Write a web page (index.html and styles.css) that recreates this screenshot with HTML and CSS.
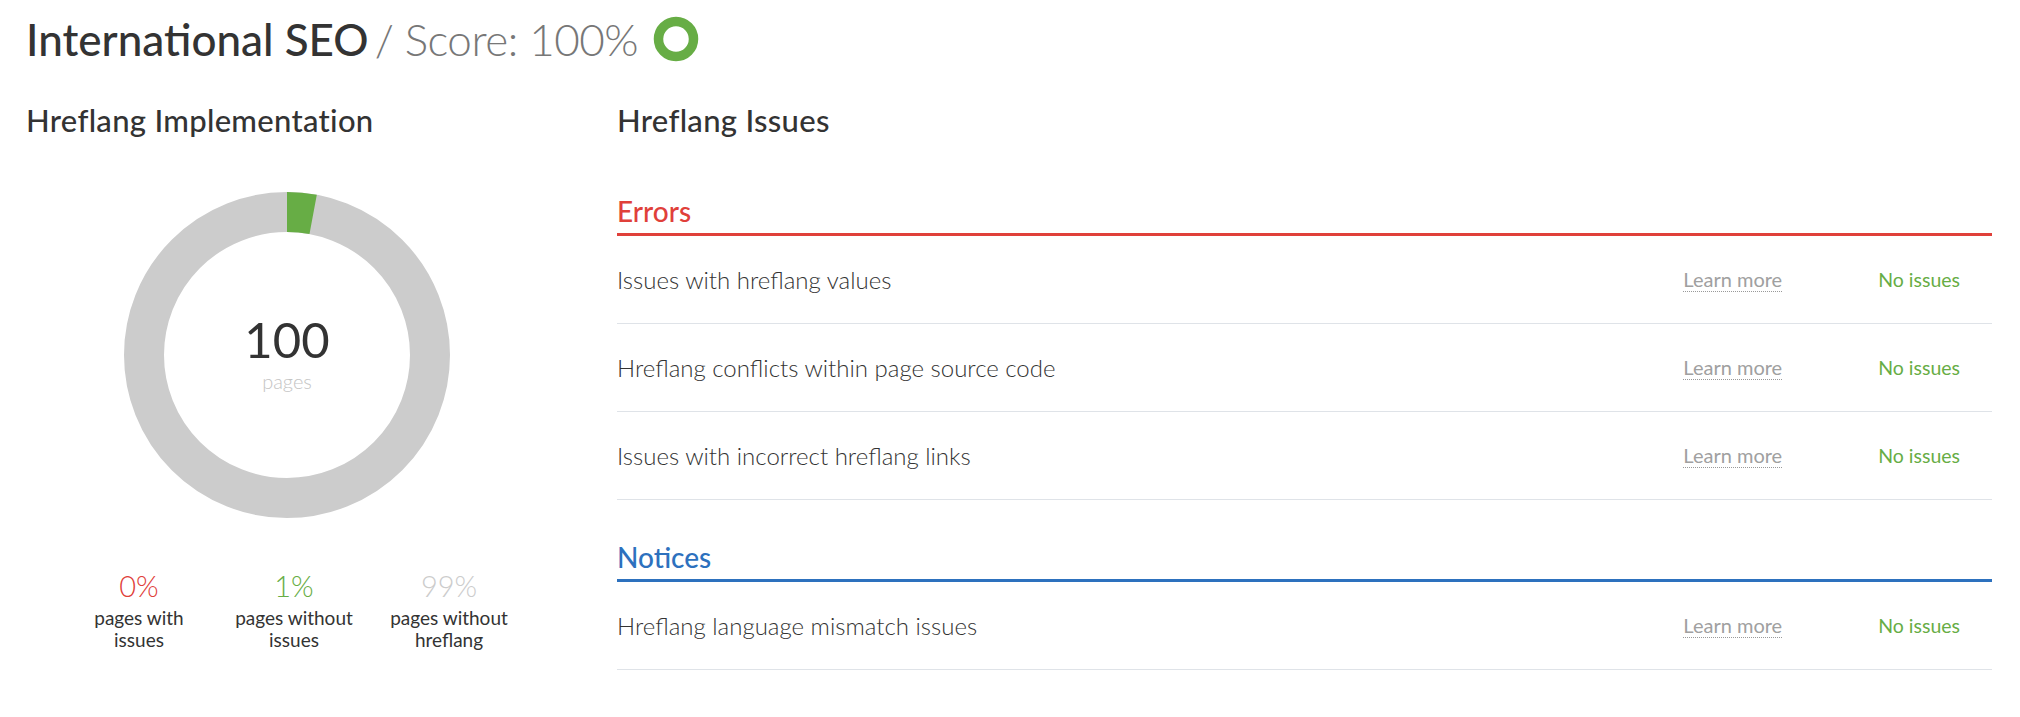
FILE: index.html
```html
<!DOCTYPE html>
<html lang="en">
<head>
    <meta charset="UTF-8">
    <meta name="viewport" content="width=device-width, initial-scale=1.0">
    <title>International SEO</title>
    <link rel="stylesheet" href="styles.css">
</head>
<body>

    <div class="page">
        <!-- Titre + score global -->
        <h1 class="page-title">
            <span class="title-main">International SEO</span>
            <span class="score">/ Score: 100%</span>
            <svg class="score-ring" width="46" height="46" viewBox="0 0 46 46">
                <circle cx="23" cy="23" r="17.5" fill="none" stroke="#67ad45" stroke-width="9.5"/>
            </svg>
        </h1>

        <div class="columns">
            <!-- Colonne gauche : graphique -->
            <section class="impl">
                <h2 class="block-title">Hreflang Implementation</h2>

                <div class="donut">
                    <svg width="326" height="326" viewBox="0 0 326 326">
                        <circle cx="163" cy="163" r="143" fill="none" stroke="#cccccc" stroke-width="40"/>
                        <circle cx="163" cy="163" r="143" fill="none" stroke="#67ad45" stroke-width="40"
                                stroke-dasharray="26.3 900" transform="rotate(-90 163 163)"/>
                    </svg>
                    <div class="donut-label">
                        <span class="donut-num">100</span>
                        <span class="donut-unit">pages</span>
                    </div>
                </div>

                <div class="stats">
                    <div class="stat">
                        <div class="stat-value red">0%</div>
                        <div class="stat-label">pages with<br>issues</div>
                    </div>
                    <div class="stat">
                        <div class="stat-value green">1%</div>
                        <div class="stat-label">pages without<br>issues</div>
                    </div>
                    <div class="stat">
                        <div class="stat-value grey">99%</div>
                        <div class="stat-label">pages without<br>hreflang</div>
                    </div>
                </div>
            </section>

            <!-- Colonne droite : liste des problèmes -->
            <section class="issues">
                <h2 class="block-title">Hreflang Issues</h2>

                <div class="group errors">
                    <h3 class="group-title">Errors</h3>
                    <div class="issue-row">
                        <span class="issue-name">Issues with hreflang values</span>
                        <a class="learn-more" href="#">Learn more</a>
                        <span class="issue-status">No issues</span>
                    </div>
                    <div class="issue-row">
                        <span class="issue-name">Hreflang conflicts within page source code</span>
                        <a class="learn-more" href="#">Learn more</a>
                        <span class="issue-status">No issues</span>
                    </div>
                    <div class="issue-row">
                        <span class="issue-name">Issues with incorrect hreflang links</span>
                        <a class="learn-more" href="#">Learn more</a>
                        <span class="issue-status">No issues</span>
                    </div>
                </div>

                <div class="group notices">
                    <h3 class="group-title">Notices</h3>
                    <div class="issue-row">
                        <span class="issue-name">Hreflang language mismatch issues</span>
                        <a class="learn-more" href="#">Learn more</a>
                        <span class="issue-status">No issues</span>
                    </div>
                </div>
            </section>
        </div>
    </div>

</body>
</html>
```

FILE: styles.css
```css
/* Police et couleurs de base */
body {
    margin: 0;
    font-family: Lato, "Liberation Sans", sans-serif;
    color: #333;
    background: #fff;
}

.page {
    padding: 14px 28px 0 26px;
}

/* Titre principal */
.page-title {
    display: flex;
    align-items: center;
    margin: 0;
    font-size: 44px;
    line-height: 50px;
    font-weight: 500;
}

.score {
    margin-left: 6px;
    color: #777;
    font-weight: 300;
    letter-spacing: -0.5px;
}

.score-ring {
    margin-left: 15px;
}

/* Deux colonnes */
.columns {
    display: flex;
    gap: 69px;
    margin-top: 39px;
}

.impl {
    width: 522px;
    flex: none;
}

.issues {
    flex: 1;
}

.block-title {
    margin: 0;
    font-size: 31px;
    line-height: 35px;
    font-weight: 500;
    letter-spacing: 0.3px;
}

/* Graphique en anneau */
.donut {
    display: grid;
    width: 326px;
    height: 326px;
    margin: 54px auto 0;
}

.donut > * {
    grid-area: 1 / 1;
}

.donut-label {
    display: flex;
    flex-direction: column;
    align-items: center;
    justify-content: center;
    padding-bottom: 8px;
}

.donut-num {
    font-size: 49px;
    line-height: 59px;
    font-weight: 400;
}

.donut-unit {
    font-size: 20px;
    line-height: 24px;
    color: #c4c4c4;
    font-weight: 300;
}

/* Statistiques sous le graphique */
.stats {
    display: flex;
    justify-content: center;
    margin-top: 53px;
    padding-left: 14px;
}

.stat {
    width: 155px;
    text-align: center;
}

.stat-value {
    font-size: 29px;
    line-height: 30px;
    font-weight: 300;
}

.stat-label {
    margin-top: 6px;
    font-size: 19px;
    line-height: 22px;
}

.red { color: #e0403a; }
.green { color: #67ad45; }
.grey { color: #ccc; }

/* Groupes d'erreurs / avis */
.group {
    margin-top: 58px;
}

.group + .group {
    margin-top: 42px;
}

.group-title {
    margin: 0;
    padding-bottom: 7px;
    font-size: 28px;
    line-height: 30px;
    font-weight: 500;
}

.errors .group-title {
    color: #e0403a;
    border-bottom: 3px solid #e0403a;
}

.notices .group-title {
    color: #2d71be;
    border-bottom: 3px solid #2d71be;
}

.issue-row {
    display: flex;
    align-items: center;
    height: 88px;
    box-sizing: border-box;
    border-bottom: 1px solid #dfe3e8;
    padding-right: 32px;
}

.issue-name {
    flex: 1;
    font-size: 24px;
    font-weight: 300;
}

.learn-more {
    color: #a0a0a0;
    font-size: 20px;
    line-height: 24px;
    text-decoration: none;
    border-bottom: 1px dotted #999;
}

.issue-status {
    margin-left: 96px;
    color: #67ad45;
    font-size: 19.5px;
}
```
